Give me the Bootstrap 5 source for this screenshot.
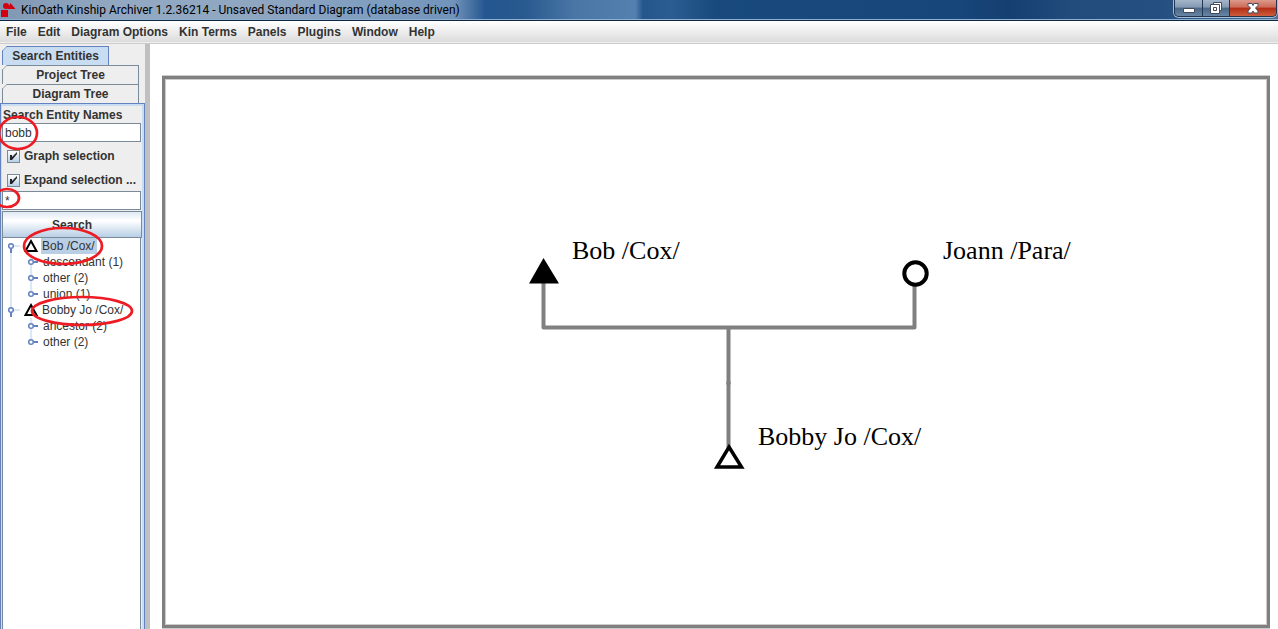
<!DOCTYPE html>
<html lang="en">
<head>
<meta charset="utf-8">
<meta name="viewport" content="width=device-width, initial-scale=1">
<title>KinOath Kinship Archiver</title>
<link href="https://cdn.jsdelivr.net/npm/bootstrap@5.3.0/dist/css/bootstrap.min.css" rel="stylesheet">
<style>
  body { font: bold 12px/16px "Liberation Sans", Arial, sans-serif; color: #333; background: #fff; }
  .titlebar {
    height: 21px; color: #000; font: 12px/20px Roboto, "Segoe UI", sans-serif;
    border-bottom: 1px solid #0f2740; box-shadow: inset 0 -1px #8db0d2;
    background: linear-gradient(90deg, #8198b4 0, #93a9c3 10%, #8fa6c1 20%, #7e9dbf 30%, #7193ba 35.5%, #24568f 38%, #28598f 41%, #4a76a6 45%, #5480b0 49.7%, #24568d 50.3%, #2b5d92 52.5%, #194a7d 56%, #17467a 75%, #153f71 79%, #224c7b 84%, #244f80 91%, #4d7299 100%);
  }
  .winctl { height: 17px; border: 1px solid #22364f; border-top: 0; border-radius: 0 0 5px 5px; overflow: hidden; box-shadow: 0 0 0 1px #a9bdd2; margin-right: 1px; }
  .winctl button { border: 0; padding: 0; height: 16px; width: 28px; line-height: 0; background: linear-gradient(#a5b6ca 0, #8499b2 45%, #4c6786 50%, #6785a5 100%); border-right: 1px solid #22364f; }
  .winctl .restorer { width: 27px; }
  .winctl .closer { width: 46px; border: 0; background: linear-gradient(#dc9a8c 0, #cc6b58 45%, #b32d14 50%, #cf5d3c 100%); }
  .menubar { height: 23px; padding-left: 6px; gap: 11px; background: linear-gradient(#fff, #dadada); border-bottom: 1px solid #ccc; box-shadow: inset 0 -1px #eee; }
  .menubar a { color: #333; text-decoration: none; }
  .side { width: 145px; background: #eee; padding-top: 2px; }
  .splitter { width: 5px; background: #c0c0c0; }
  .sidetab { position: relative; height: 19px; width: 137px; margin-left: 2px; padding: 0; border: 1px solid #7a8a99; border-bottom: 0; background: #eee; font-weight: bold; color: #333; line-height: 17px; clip-path: polygon(5px 0, 100% 0, 100% 100%, 0 100%, 0 5px); }
  .sidetab::before { content: ""; position: absolute; left: -5px; top: -5px; width: 8px; height: 8px; border-right: 1px solid #7a8a99; transform: rotate(45deg); }
  .sidetab.active { width: 107px; background: #c8ddf2; border-color: #6382bf; }
  .sidetab.active::before { border-color: #6382bf; }
  .pane { border: 1px solid #6382bf; border-bottom: 0; box-shadow: inset 0 2px #c8ddf2, inset -2px 0 #c8ddf2, inset 1px 0 #c8ddf2; padding: 3px 2px 0 1px; }
  .pane label { display: block; padding-left: 1px; }
  .field { width: 139px; height: 19px; border: 1px solid #7a8a99; padding: 0 2px; border-radius: 0; font: 12px/16px "Liberation Sans", Arial, sans-serif; color: #333; background: #fff; display: block; }
  .ticks { padding-top: 1px; }
  .tick { height: 24px; padding: 2px 0 0 5px; gap: 3px; }
  .tick input { appearance: none; width: 13px; height: 13px; margin: 0; border: 1px solid #7a8a99; background: url("data:image/svg+xml,%3Csvg xmlns='http://www.w3.org/2000/svg' viewBox='0 0 11 11'%3E%3Cpath d='M2 4h2v2l5-5v2L4 9H2z' fill='%23222'/%3E%3C/svg%3E"), linear-gradient(#fff, #b8cfe5); }
  .gobtn { width: 140px; height: 27px; border: 1px solid #7a8a99; padding: 0; font-weight: bold; color: #333; background: linear-gradient(#dfe9f4 0, #fff 35%, #b8cfe5 100%); margin-top: 1px; }
  .tree { width: 139px; border: 1px solid #7a8a99; border-width: 0 1px; background: #fff; font-weight: normal; }
  .tree li { height: 16px; }
  .tree svg { display: block; flex: none; }
  .tree .name { padding: 0 1px; white-space: nowrap; }
  .tree .chosen { background: #b8cfe5; padding-right: 2px; }
  .canvas { padding: 32px 8px 1px 12px; background: #fff; }
  .frame { border: 3px solid #808080; box-shadow: inset 0 0 0 1px #ccc, 0 -1px #ccc, 0 1px #ccc; }
  .frame text { font: 26px "Liberation Serif", "Times New Roman", serif; }
  .marks { position: absolute; left: 0; top: 0; pointer-events: none; }
</style>
</head>
<body class="vh-100 d-flex flex-column overflow-hidden position-relative">
<header class="titlebar d-flex align-items-start flex-shrink-0">
  <svg width="21" height="20" viewBox="0 0 21 20" fill="#d4000f" aria-hidden="true"><path d="M1 10h7v7H1z"/><circle cx="6" cy="6" r="3"/><path d="M10.500 3l5 6h-8z"/></svg>
  <span class="flex-grow-1 text-nowrap">KinOath Kinship Archiver 1.2.36214 - Unsaved Standard Diagram (database driven)</span>
  <div class="winctl d-flex">
    <button type="button" aria-label="Minimize"><svg width="14" height="14" viewBox="0 0 14 14"><path d="M1.500 7.500h11v4h-11z" fill="#fff" stroke="#444b5c"/></svg></button>
    <button type="button" class="restorer" aria-label="Restore"><svg width="14" height="14" viewBox="0 0 14 14"><path d="M4.500 1.500h8v8h-8z" fill="#fff" stroke="#444b5c"/><path d="M1.500 3.500h9v9h-9zM4.500 6.500v3h3v-3z" fill="#fff" fill-rule="evenodd" stroke="#444b5c"/></svg></button>
    <button type="button" class="closer" aria-label="Close"><svg width="14" height="14" viewBox="0 0 14 14"><path d="M2 2.500h4l1 2 1-2h4v2L9.500 7l2.500 3v2H8L7 10l-1 2H2v-2l2.500-3L2 4.500z" fill="#fff" stroke="#444b5c"/></svg></button>
  </div>
</header>
<nav class="menubar d-flex align-items-center flex-shrink-0">
  <a href="#">File</a><a href="#">Edit</a><a href="#">Diagram Options</a><a href="#">Kin Terms</a><a href="#">Panels</a><a href="#">Plugins</a><a href="#">Window</a><a href="#">Help</a>
</nav>
<main class="d-flex flex-grow-1">
  <aside class="side d-flex flex-column flex-shrink-0">
    <button type="button" class="sidetab active">Search Entities</button>
    <button type="button" class="sidetab">Project Tree</button>
    <button type="button" class="sidetab">Diagram Tree</button>
    <div class="pane d-flex flex-column flex-grow-1">
      <label for="names">Search Entity Names</label>
      <input id="names" class="field" type="text" value="bobb">
      <div class="ticks">
        <div class="tick d-flex align-items-center"><input id="graph" type="checkbox" checked><label for="graph">Graph selection</label></div>
        <div class="tick d-flex align-items-center"><input id="expand" type="checkbox" checked><label for="expand">Expand selection ...</label></div>
      </div>
      <input class="field" type="text" value="*" aria-label="Expand selection pattern">
      <button type="button" class="gobtn">Search</button>
      <ul class="tree list-unstyled mb-0 flex-grow-1">
        <li class="d-flex"><svg width="38" height="16" viewBox="0 0 38 16"><path d="M8 8v8" stroke="#b8cfe5"/><use href="#root"/><use href="#man"/></svg><span class="name chosen">Bob /Cox/</span></li>
        <li class="d-flex"><svg width="39" height="16" viewBox="0 0 39 16"><use href="#rail"/><use href="#guide"/><use href="#leaf"/></svg><span class="name">descendant (1)</span></li>
        <li class="d-flex"><svg width="39" height="16" viewBox="0 0 39 16"><use href="#rail"/><use href="#guide"/><use href="#leaf"/></svg><span class="name">other (2)</span></li>
        <li class="d-flex"><svg width="39" height="16" viewBox="0 0 39 16"><use href="#rail"/><path d="M28 0v8" stroke="#b8cfe5"/><use href="#leaf"/></svg><span class="name">union (1)</span></li>
        <li class="d-flex"><svg width="38" height="16" viewBox="0 0 38 16"><path d="M8 0v6" stroke="#b8cfe5"/><use href="#root"/><use href="#man"/></svg><span class="name">Bobby Jo /Cox/</span></li>
        <li class="d-flex"><svg width="39" height="16" viewBox="0 0 39 16"><use href="#guide"/><use href="#leaf"/></svg><span class="name">ancestor (2)</span></li>
        <li class="d-flex"><svg width="39" height="16" viewBox="0 0 39 16"><path d="M28 0v8" stroke="#b8cfe5"/><use href="#leaf"/></svg><span class="name">other (2)</span></li>
      </ul>
    </div>
  </aside>
  <div class="splitter flex-shrink-0"></div>
  <section class="canvas flex-grow-1 d-flex">
    <div class="frame flex-grow-1 d-flex">
      <svg class="w-100 h-100" viewBox="165 79 1102 546" preserveAspectRatio="xMidYMin meet" role="img" aria-label="Kinship diagram">
        <g fill="none" stroke="#808080" stroke-width="4" stroke-linejoin="round">
          <path d="M543.500 276V327.500H914.500V276M728.500 327.500V450"/>
        </g>
        <circle cx="728.500" cy="383" r="2.300" fill="#808080"/>
        <path d="M543.500 258l15.500 25.500h-30z"/>
        <path d="M729 447l12.500 20h-24.500z" fill="#fff" stroke="#000" stroke-width="3.500"/>
        <circle cx="915.500" cy="273.500" r="11.200" fill="#fff" stroke="#000" stroke-width="4"/>
        <text x="572" y="259">Bob /Cox/</text>
        <text x="943" y="259">Joann /Para/</text>
        <text x="758" y="445">Bobby Jo /Cox/</text>
      </svg>
    </div>
  </section>
</main>
<svg class="marks" width="145" height="345" viewBox="0 0 145 345" fill="none" stroke="#ed1c24" stroke-width="2.700" aria-hidden="true">
  <defs>
    <g id="root"><path d="M11 8h6" stroke="#b8cfe5" stroke-width="1"/><path d="M8 10v5" stroke="#6382bf" stroke-width="2"/><circle cx="8" cy="8" r="2.300" fill="#fff" stroke="#6382bf" stroke-width="1.500"/></g>
    <g id="leaf"><path d="M30 8h5" stroke="#6382bf" stroke-width="2"/><circle cx="28" cy="8" r="2.300" fill="#fff" stroke="#6382bf" stroke-width="1.500"/></g>
    <path id="rail" d="M8 0v16" stroke="#b8cfe5" stroke-width="1"/>
    <path id="guide" d="M28 0v16" stroke="#b8cfe5" stroke-width="1"/>
    <path id="man" d="M28 3l5.500 10h-11z" fill="#fff" stroke="#000" stroke-width="2"/>
  </defs>
  <ellipse cx="18" cy="133" rx="19" ry="16"/>
  <ellipse cx="7" cy="198" rx="12" ry="9"/>
  <ellipse cx="63" cy="246" rx="39" ry="18"/>
  <ellipse cx="82" cy="311" rx="50" ry="14"/>
</svg>
<script src="https://cdn.jsdelivr.net/npm/bootstrap@5.3.0/dist/js/bootstrap.bundle.min.js"></script>
</body>
</html>
